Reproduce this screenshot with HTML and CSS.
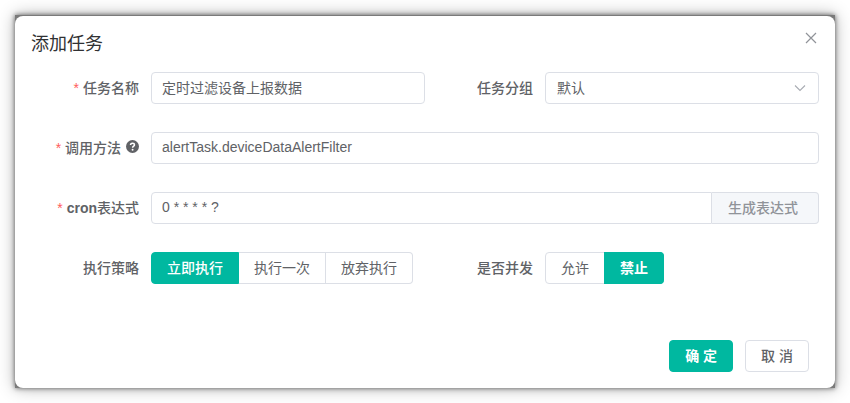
FILE: index.html
```
<!DOCTYPE html>
<html lang="zh">
<head>
    <meta charset="UTF-8">
    <meta name="viewport" content="width=device-width, initial-scale=1.0">
    <title>添加任务</title>
    <link rel="stylesheet" href="styles.css">
</head>
<body>
    <div class="frame">
        <form class="dialog">
            <div class="dialog-header">
                <h2 class="dialog-title">添加任务</h2>
                <button type="button" class="close-btn" aria-label="关闭">
                    <svg width="12" height="12" viewBox="0 0 12 12"><path d="M1 1l10 10M11 1L1 11" fill="none" stroke="currentColor" stroke-width="1.2"/></svg>
                </button>
            </div>
            <div class="form-grid">
                <div class="form-item">
                    <label class="form-label required" for="jobName">任务名称</label>
                    <input type="text" class="text-input" id="jobName" value="定时过滤设备上报数据">
                </div>
                <div class="form-item">
                    <label class="form-label" for="jobGroup">任务分组</label>
                    <div class="select-box">
                        <select id="jobGroup">
                            <option>默认</option>
                            <option>系统</option>
                        </select>
                        <svg class="arrow" width="12" height="12" viewBox="0 0 12 12"><path d="M1 3.5l5 5 5-5" fill="none" stroke="currentColor" stroke-width="1.1"/></svg>
                    </div>
                </div>
                <div class="form-item full">
                    <label class="form-label required" for="invokeTarget">调用方法
                        <svg class="help" width="13" height="13" viewBox="0 0 12 12"><circle cx="6" cy="6" r="6" fill="currentColor"/><path d="M4.2 4.7C4.2 3.5 5 3 6 3s1.8.6 1.8 1.6C7.8 5.7 6.1 5.8 6.1 7.2" fill="none" stroke="#fff" stroke-width="1.4"/><circle cx="6.1" cy="9" r=".9" fill="#fff"/></svg>
                    </label>
                    <input type="text" class="text-input" id="invokeTarget" value="alertTask.deviceDataAlertFilter">
                </div>
                <div class="form-item full">
                    <label class="form-label required" for="cron"><b>cron</b>表达式</label>
                    <div class="input-group">
                        <input type="text" class="text-input" id="cron" value="0 * * * * ?">
                        <button type="button" class="append-btn">生成表达式</button>
                    </div>
                </div>
                <div class="form-item" role="radiogroup" aria-labelledby="policyLabel">
                    <span class="form-label" id="policyLabel">执行策略</span>
                    <div class="radio-group">
                        <label class="radio-btn"><input type="radio" name="policy" checked><span>立即执行</span></label>
                        <label class="radio-btn"><input type="radio" name="policy"><span>执行一次</span></label>
                        <label class="radio-btn"><input type="radio" name="policy"><span>放弃执行</span></label>
                    </div>
                </div>
                <div class="form-item" role="radiogroup" aria-labelledby="concurrentLabel">
                    <span class="form-label" id="concurrentLabel">是否并发</span>
                    <div class="radio-group strong">
                        <label class="radio-btn"><input type="radio" name="concurrent"><span>允许</span></label>
                        <label class="radio-btn"><input type="radio" name="concurrent" checked><span>禁止</span></label>
                    </div>
                </div>
            </div>
            <div class="dialog-footer">
                <button type="submit" class="btn primary">确 定</button>
                <button type="button" class="btn">取 消</button>
            </div>
        </form>
    </div>
</body>
</html>
```
FILE: styles.css
```
* {
    box-sizing: border-box;
}
body {
    margin: 0;
    padding: 15px;
    background-color: #fff;
    font-family: "Liberation Sans", "Noto Sans CJK SC", sans-serif;
    font-size: 14px;
    color: #606266;
}
input, button, select {
    font-family: inherit;
    font-size: 14px;
    color: #606266;
}
.frame {
    padding-top: 1px;
    background-color: #7a7a7a;
    box-shadow: 0 0 16px rgba(0,0,0,0.3), 0 0 5px rgba(0,0,0,0.6);
}
.dialog {
    padding: 16px;
    border-radius: 8px;
    background-color: #fff;
}
.dialog-header {
    display: flex;
    justify-content: space-between;
    align-items: flex-start;
    height: 40px;
}
.dialog-title {
    margin: 0;
    font-size: 18px;
    font-weight: normal;
    line-height: 24px;
    color: #303133;
}
.close-btn {
    display: flex;
    padding: 0 2px;
    border: none;
    background: none;
    color: #909399;
    cursor: pointer;
}
.form-grid {
    display: grid;
    grid-template-columns: 1fr 1fr;
    row-gap: 28px;
}
.form-item {
    display: flex;
    height: 32px;
}
.full {
    grid-column: span 2;
}
.form-label {
    flex: 0 0 120px;
    padding-right: 12px;
    line-height: 32px;
    text-align: right;
    font-weight: 500;
}
.required::before {
    content: "*";
    margin-right: 4px;
    color: #ff5c5c;
}
.help {
    margin-left: 1px;
}
.text-input {
    flex: 1;
    min-width: 0;
    height: 32px;
    padding: 0 10px 2px;
    border: 1px solid #dcdfe6;
    border-radius: 4px;
    background-color: #fff;
}
.select-box {
    position: relative;
    flex: 1;
}
.select-box select {
    width: 100%;
    height: 32px;
    padding: 0 32px 0 11px;
    border: 1px solid #dcdfe6;
    border-radius: 4px;
    background-color: #fff;
    appearance: none;
}
.arrow {
    position: absolute;
    top: 10px;
    right: 13px;
    color: #a8abb2;
    pointer-events: none;
}
.input-group {
    display: flex;
    flex: 1;
}
.input-group .text-input {
    border-radius: 4px 0 0 4px;
}
.append-btn {
    padding: 0 20px 2px 16px;
    border: 1px solid #dcdfe6;
    border-left: none;
    border-radius: 0 4px 4px 0;
    background-color: #f5f7fa;
    color: #909399;
    font-weight: 500;
    cursor: pointer;
}
.radio-group {
    display: flex;
}
.radio-btn {
    cursor: pointer;
}
.radio-btn input {
    position: absolute;
    opacity: 0;
}
.radio-btn span {
    display: block;
    padding: 0 15px;
    border: 1px solid #dcdfe6;
    border-left: none;
    line-height: 30px;
}
.radio-btn:first-child span {
    border-left: 1px solid #dcdfe6;
    border-radius: 4px 0 0 4px;
}
.radio-btn:last-child span {
    border-radius: 0 4px 4px 0;
}
.radio-btn input:checked + span {
    border-color: #00b8a0;
    background-color: #00b8a0;
    box-shadow: -1px 0 0 #00b8a0;
    color: #fff;
    font-weight: 500;
}
.radio-btn:first-child input:checked + span {
    box-shadow: none;
}
.strong .radio-btn input:checked + span {
    font-weight: 700;
}
.dialog-footer {
    display: flex;
    justify-content: flex-end;
    gap: 12px;
    padding: 56px 10px 0 0;
}
.btn {
    height: 32px;
    padding: 0 15px 2px;
    border: 1px solid #dcdfe6;
    border-radius: 4px;
    background-color: #fff;
    font-weight: 500;
    cursor: pointer;
}
.btn.primary {
    border-color: #00b8a0;
    background-color: #00b8a0;
    color: #fff;
    font-weight: 700;
}
```
